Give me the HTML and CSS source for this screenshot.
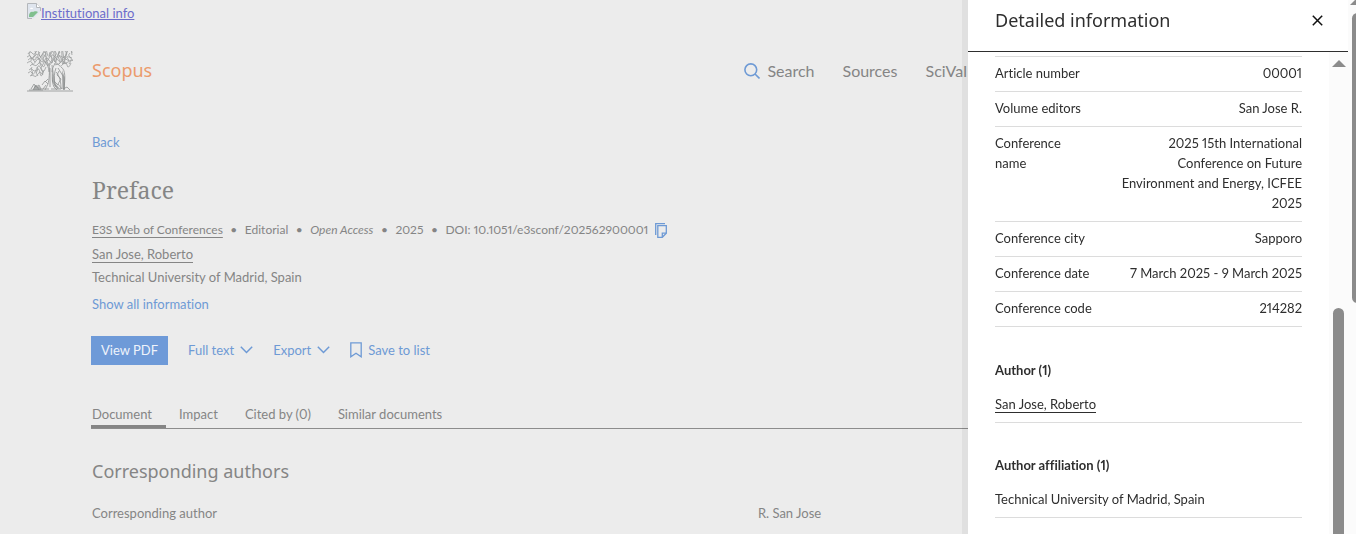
FILE: index.html
```html
<!DOCTYPE html>
<html lang="en">
<head>
<meta charset="utf-8">
<title>Scopus - Preface</title>
<link rel="stylesheet" href="styles.css">
</head>
<body>
<div class="page">
  <a class="institution" href="#"><svg width="14" height="16" viewBox="0 0 14 16" aria-hidden="true"><path d="M.5.5h9l4 4v5l-5 6h-8z" fill="#dfe5ee"/><path d="M13.500 8V4.500l-4-4h-9v15H5" fill="none" stroke="#b4b7bb"/><path d="M9.500.5v4h4" fill="#fff" stroke="#b4b7bb"/><path d="M2 13c0-3 2-5 4-4 1-1 4-1 5 0l-5 5H2z" fill="#80bf8e"/><path d="M14 8v8H6z" fill="#ececec"/><path d="M3 6c1-2 3-1 3 0z" fill="#fff"/></svg>Institutional info</a>
  <header class="site-header">
    <a class="brand" href="#">
      <svg class="tree" width="46" height="41" viewBox="0 0 46 41" aria-hidden="true">
        <g fill="none" stroke="#9b9d9d" stroke-width=".8">
          <path d="M1 3q2-4 4-1t4-1 3 2 4-1 4 0 4-1 4 1 4-1 4 1 4-2 5 2M0 6q3-3 4 0t4-1 3 1 4-2 4 2 4-1 4 1 4-2 4 2 4-1 6-1M1 9q2-3 5-1t3-1 4 2 3-2 5 1 4 0 4-1 3 1 5-1 4 1 4-1M0 12q4-3 5 0t4-2 4 2 4-1 3 0 5 0 4-1 5 1 3-1 4 1 4-1M3 15q2-3 4-1t4-1 4 1 3-1 4 1M28 14q3-3 4 0t4-1 4 1 4-2"/>
          <path d="M3 1q-2 2 0 4t1 5M8 0q2 3-1 5t1 6M13 1q-3 2 0 4t-1 7M18 0q2 3-1 6t2 6M23 1q-2 3 1 5t-2 7M28 0q3 3 0 5t1 7M33 1q-3 2 0 5t-1 7M38 0q3 3-1 6t2 7M43 2q-3 2 0 4t-1 7"/>
          <path d="M2 19q2-3 4 0t4-2 4 1 5-2M1 22q3-3 4 0t4-2 4 2 4-3M3 25q2-2 4 0t4-2 5 1M5 16q-2 2 0 4t-1 5M10 16q2 2 0 4t1 5M15 15q-2 2 0 4t0 4"/>
        </g>
        <g fill="none" stroke="#909393" stroke-width=".8">
          <path d="M22 13c1 8 0 16-1 20l-3 6M25 14c1 7-1 16 2 22l3 3M23 17v19M28 12c-1 3-3 5-3 9M18 10c2 4 4 6 4 11M29 17c-2 5-2 10-1 17l3 4M34 16c5 3 4 12 3 22M31 17l5 8v13M29 21c4 4 5 11 5 17M32 20l-2 4 4 4-3 5 4 5M27 30l4 4M18 31l3-3M15 34l3-4 3 3M16 38l3-4"/>
          <path d="M0 40h46M4 38l3-5 2 3 3-2 2 4M6 39l3-5 3 5M13 38h9M24 38h10M36 38l4-2 3 3M2 39h14"/>
        </g>
        <path d="M26 17l2 15 5 6-5-2-3-6zM35 19l3 8v12h-2zM6 39l2-5 2 2 2-1 2 4z" fill="#858989" opacity=".65"/>
      </svg>
      <span class="brand-name">Scopus</span>
    </a>
    <nav class="site-nav" aria-label="Main">
      <a class="search-link" href="#"><svg width="16" height="16" viewBox="0 0 16 16" fill="none" stroke="#6e9ad5" stroke-width="1.600" aria-hidden="true"><circle cx="6.800" cy="6.800" r="5.900"/><path d="M11 11l4.500 4.500"/></svg>Search</a>
      <a href="#">Sources</a>
      <a href="#">SciVal</a>
    </nav>
  </header>
  <main class="content">
    <a class="action back" href="#">Back</a>
    <h1>Preface</h1>
    <ul class="meta">
      <li><a class="underlined" href="#">E3S Web of Conferences</a></li>
      <li>Editorial</li>
      <li><em>Open Access</em></li>
      <li>2025</li>
      <li>DOI: 10.1051/e3sconf/202562900001<button class="copy" type="button" aria-label="Copy DOI"><svg width="12" height="15" viewBox="0 0 12 15" fill="none" stroke="#6e9ad5" stroke-width="1.300" aria-hidden="true"><path d="M.7 12V.7H10"/><path d="M2.800 2.700h8.500v7.600l-4 4H2.800z"/><path d="M7.300 14.200v-4h4"/></svg></button></li>
    </ul>
    <p class="author"><a class="underlined" href="#">San Jose, Roberto</a></p>
    <p class="affiliation">Technical University of Madrid, Spain</p>
    <button class="action show-all" type="button">Show all information</button>
    <div class="toolbar">
      <button class="primary" type="button">View PDF</button>
      <button class="action menu-button" type="button">Full text<svg width="13" height="8" viewBox="0 0 13 8" fill="none" stroke="#6e9ad5" stroke-width="1.500" aria-hidden="true"><path d="M.8.8l5.700 5.700L12.200.8"/></svg></button>
      <button class="action menu-button" type="button">Export<svg width="13" height="8" viewBox="0 0 13 8" fill="none" stroke="#6e9ad5" stroke-width="1.500" aria-hidden="true"><path d="M.8.8l5.700 5.700L12.200.8"/></svg></button>
      <button class="action menu-button" type="button"><svg width="12" height="16" viewBox="0 0 12 16" fill="none" stroke="#6e9ad5" stroke-width="1.300" aria-hidden="true"><path d="M.8.8h10.400v14L6 11.200.8 14.800z"/></svg>Save to list</button>
    </div>
    <nav class="tabs" aria-label="Document sections">
      <a class="tab current" href="#">Document</a>
      <a class="tab" href="#">Impact</a>
      <a class="tab" href="#">Cited by (0)</a>
      <a class="tab" href="#">Similar documents</a>
    </nav>
    <h2>Corresponding authors</h2>
    <dl class="correspondence">
      <dt>Corresponding author</dt>
      <dd>R. San Jose</dd>
    </dl>
  </main>
</div>
<aside class="drawer" aria-label="Detailed information">
  <header class="drawer-header">
    <h2>Detailed information</h2>
    <button class="close" type="button" aria-label="Close"><svg width="11" height="11" viewBox="0 0 11 11" stroke="#111" stroke-width="1.500" aria-hidden="true"><path d="M.8.8l9.400 9.400M10.200.8L.8 10.200"/></svg></button>
  </header>
  <div class="drawer-body">
    <div class="details">
      <dl class="facts">
        <div><dt>Article number</dt><dd>00001</dd></div>
        <div><dt>Volume editors</dt><dd>San Jose R.</dd></div>
        <div><dt>Conference name</dt><dd>2025 15th International Conference on Future Environment and Energy, ICFEE 2025</dd></div>
        <div><dt>Conference city</dt><dd>Sapporo</dd></div>
        <div><dt>Conference date</dt><dd>7 March 2025 - 9 March 2025</dd></div>
        <div><dt>Conference code</dt><dd>214282</dd></div>
      </dl>
      <section class="group">
        <h3>Author (1)</h3>
        <p><a class="underlined" href="#">San Jose, Roberto</a></p>
      </section>
      <section class="group">
        <h3>Author affiliation (1)</h3>
        <p>Technical University of Madrid, Spain</p>
      </section>
    </div>
    <div class="drawer-scroll" aria-hidden="true"><i class="arrow"></i><i class="thumb"></i></div>
  </div>
</aside>
<div class="page-scroll" aria-hidden="true"><i class="arrow"></i><i class="thumb"></i></div>
</body>
</html>
```
FILE: styles.css
```css
* { box-sizing: border-box; }
html, body { height: 100%; }
body {
  margin: 0;
  overflow: hidden;
  background: #ececec;
  color: #858585;
  font: 13px/20px Lato, sans-serif;
  font-variant-numeric: proportional-nums;
  font-variant-ligatures: no-common-ligatures;
}
h1, h2, h3, p, dl, dd, ul { margin: 0; padding: 0; font-weight: 400; }
a { color: inherit; text-decoration: none; }
button { padding: 0; border: 0; background: none; color: inherit; font: inherit; }
svg { flex: none; }
.underlined { text-decoration: underline; text-underline-offset: 3px; }

.page { height: 100%; overflow: hidden; }
.institution {
  display: inline-flex;
  margin: 3px 27px 0;
  color: #6c6ccb;
  text-decoration: underline;
}
.site-header {
  display: flex;
  align-items: center;
  justify-content: space-between;
  margin-top: 27px;
  padding: 0 389px 0 27px;
}
.brand { display: flex; align-items: center; gap: 19px; }
.brand-name { color: #eb9b6c; font: 18px/24px "Noto Sans", sans-serif; padding-bottom: 4px; }
.site-nav { display: flex; gap: 28px; padding-bottom: 2px; font-size: 16px; }
.search-link { display: flex; align-items: center; gap: 7px; }

.content { padding: 0 92px; }
.action { color: #6e9ad5; }
.back { display: block; margin-top: 40px; }
h1 { margin-top: 22px; font: 23px/32px "Noto Serif", "Liberation Serif", serif; }
.meta { display: flex; margin-top: 14px; font-size: 12px; list-style: none; }
.meta li { display: flex; align-items: center; }
.meta li + li::before { content: "•"; width: 22px; text-align: center; }
.copy { display: flex; margin-left: 7px; }
.author { margin-top: 4px; }
.affiliation { margin-top: 3px; }
.show-all { display: block; margin-top: 7px; }
.toolbar { display: flex; align-items: center; gap: 20px; margin: 22px 0 0 -1px; }
.primary { padding: 4px 10px 5px; background: #6e9ad8; color: #eef3fb; }
.menu-button { display: flex; align-items: center; gap: 6px; padding-bottom: 2px; }
.tabs {
  display: flex;
  gap: 26px;
  margin: 39px -92px 0 -1px;
  border-bottom: 1px solid #8c8c8c;
}
.tab { padding: 0 0 1px 1px; border-bottom: 3px solid transparent; }
.tab.current { padding-right: 14px; margin-right: -14px; border-color: #858585; }
.content h2 { margin-top: 30px; font: 18px/24px "Noto Sans", sans-serif; }
.correspondence { display: grid; grid-template-columns: 25fr 19fr; margin-top: 20px; }

.drawer {
  position: fixed;
  inset: 0 8px 0 auto;
  display: flex;
  flex-direction: column;
  width: 380px;
  background: #fff;
  color: #2e2e2e;
  box-shadow: -6px 0 0 rgba(0, 0, 0, .05);
}
.drawer-header {
  display: flex;
  align-items: center;
  justify-content: space-between;
  padding: 8px 25px 19px 27px;
  border-bottom: 1px solid #2e2e2e;
}
.drawer-header h2 { font: 18px/24px "Noto Sans", sans-serif; }
.close { display: flex; }
.drawer-body { display: flex; flex: 1; min-height: 0; }
.details { flex: 1; padding: 4px 27px 0; overflow: hidden; }
.facts { margin-bottom: 33px; border-top: 1px solid #dcdcdc; }
.facts div {
  display: flex;
  justify-content: space-between;
  padding: 6px 0 8px;
  border-bottom: 1px solid #dcdcdc;
}
.facts dt { width: 98px; }
.facts dd { width: 184px; text-align: right; }
.group { margin-bottom: 32px; padding-bottom: 8px; border-bottom: 1px solid #dcdcdc; }
.group h3 { margin-bottom: 14px; font-size: 13px; font-weight: 700; }
.drawer-scroll {
  display: flex;
  flex-direction: column;
  align-items: center;
  width: 19px;
  padding-top: 8px;
  background: #fbfbfb;
}
.arrow {
  border: solid transparent;
  border-width: 0 7px 7px;
  border-bottom-color: #8b8b8b;
}
.thumb { flex: 1; width: 11px; margin-top: 241px; border-radius: 6px 6px 0 0; background: #8b8b8b; }
.page-scroll {
  position: fixed;
  inset: 0 0 0 auto;
  width: 8px;
  padding-left: 4px;
  overflow: hidden;
  background: #fbfbfb;
}
.page-scroll .arrow { display: block; width: 0; margin: -2px 0 0 -2px; }
.page-scroll .thumb { display: block; height: 290px; margin-top: 8px; border-radius: 6px; }
```
